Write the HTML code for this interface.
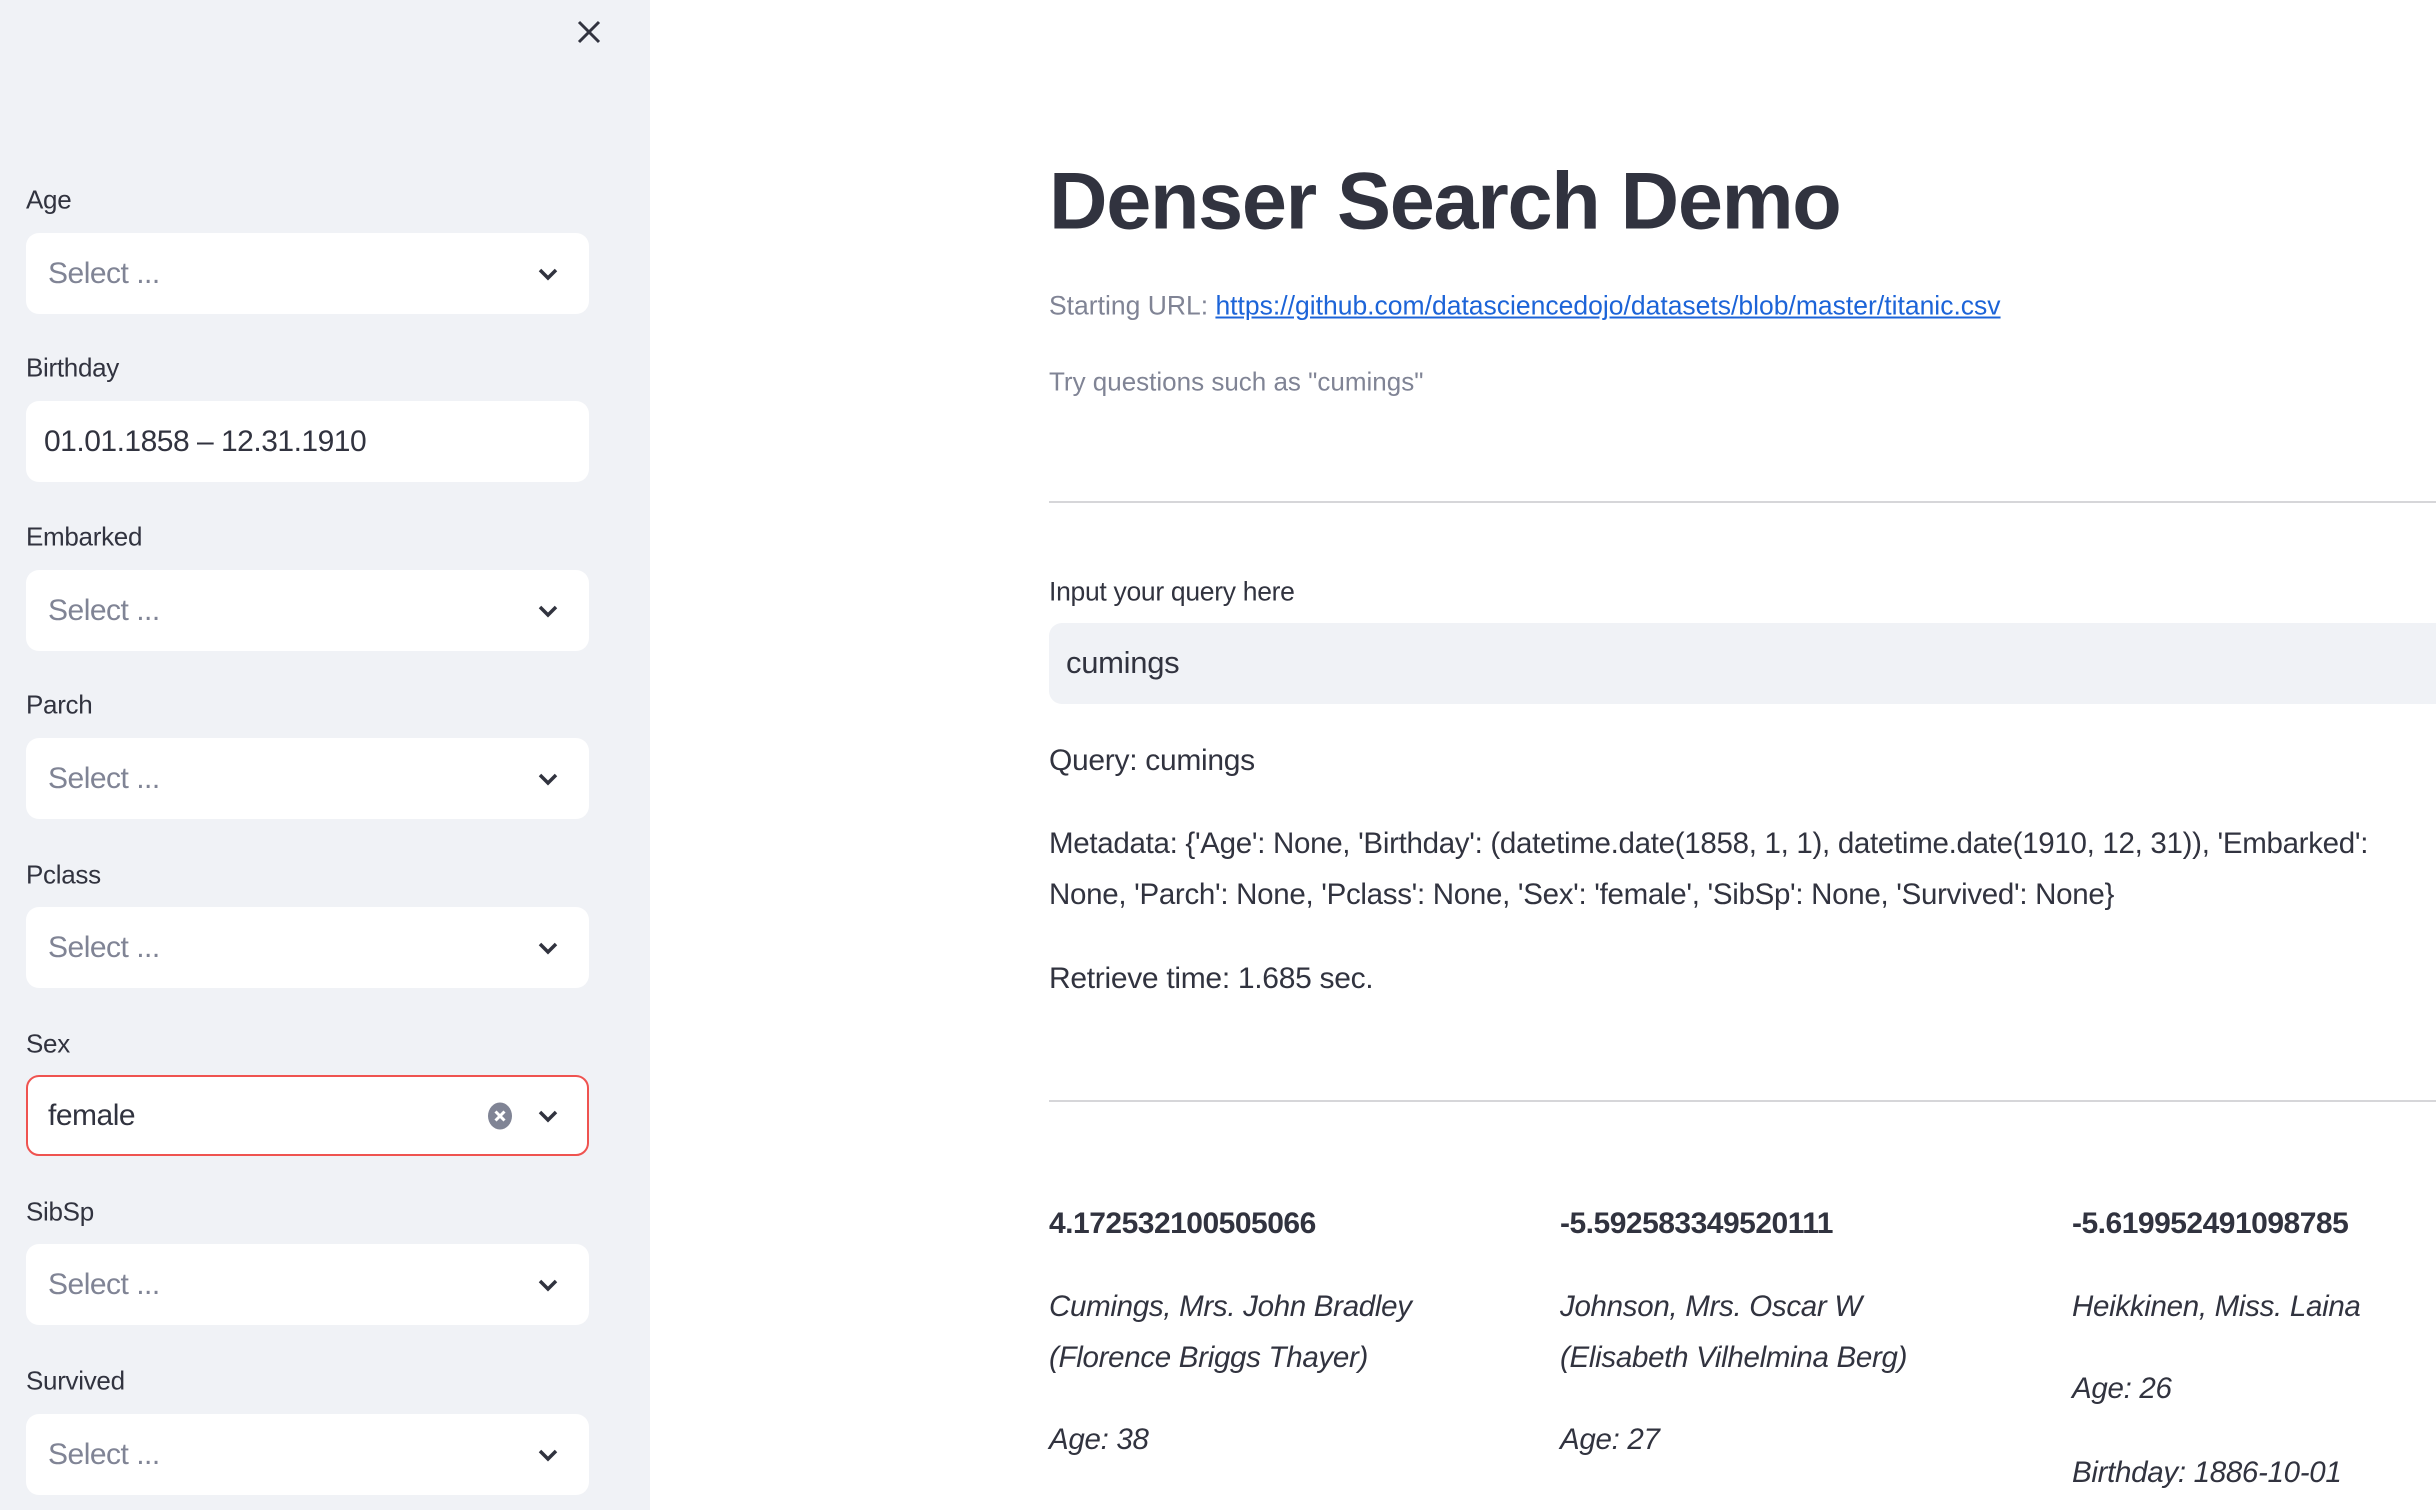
<!DOCTYPE html>
<html><head><meta charset="utf-8"><style>
*{margin:0;padding:0;box-sizing:border-box}
body{width:2436px;height:1510px;overflow:hidden;background:#fff;font-family:"Liberation Sans",sans-serif;color:#31333f;position:relative}
.sb{position:absolute;left:0;top:0;width:650px;height:1510px;background:#f0f2f6}
.lbl{position:absolute;left:26px;font-size:26px;letter-spacing:-0.3px;color:#31333f;transform:translateY(-50%)}
.box{position:absolute;left:26px;width:563px;height:81px;background:#fff;border-radius:13px}
.box .t{position:absolute;left:22px;top:50%;transform:translateY(-50%);font-size:30px;letter-spacing:-0.5px;color:#808495}
.box svg.ch{position:absolute;left:510px;top:29px}
.m{position:absolute;white-space:nowrap;transform:translateY(-50%)}
</style></head><body>
<div class="sb">
<svg style="position:absolute;left:576px;top:19px" width="26" height="26" viewBox="0 0 26 26"><path d="M3 3L23 23M23 3L3 23" stroke="#31333f" stroke-width="3"/></svg>

<div class="lbl" style="top:200px">Age</div>
<div class="box" style="top:233px"><div class="t">Select ...</div><svg class="ch" width="24" height="24" viewBox="0 0 24 24"><path d="M4 8l8 8 8-8" fill="none" stroke="#31333f" stroke-width="3.5"/></svg></div>

<div class="lbl" style="top:368px">Birthday</div>
<div class="box" style="top:401px"><div class="t" style="left:18px;color:#31333f">01.01.1858 – 12.31.1910</div></div>

<div class="lbl" style="top:537px">Embarked</div>
<div class="box" style="top:570px"><div class="t">Select ...</div><svg class="ch" width="24" height="24" viewBox="0 0 24 24"><path d="M4 8l8 8 8-8" fill="none" stroke="#31333f" stroke-width="3.5"/></svg></div>

<div class="lbl" style="top:705px">Parch</div>
<div class="box" style="top:738px"><div class="t">Select ...</div><svg class="ch" width="24" height="24" viewBox="0 0 24 24"><path d="M4 8l8 8 8-8" fill="none" stroke="#31333f" stroke-width="3.5"/></svg></div>

<div class="lbl" style="top:875px">Pclass</div>
<div class="box" style="top:907px"><div class="t">Select ...</div><svg class="ch" width="24" height="24" viewBox="0 0 24 24"><path d="M4 8l8 8 8-8" fill="none" stroke="#31333f" stroke-width="3.5"/></svg></div>

<div class="lbl" style="top:1044px">Sex</div>
<div class="box" style="top:1075px;border:2px solid #ef5350"><div class="t" style="left:20px;color:#31333f">female</div>
<svg style="position:absolute;left:458px;top:24px" width="28" height="30" viewBox="0 0 28 30"><ellipse cx="14" cy="15" rx="12" ry="13.5" fill="#808495"/><path d="M9.5 10.5l9 9M18.5 10.5l-9 9" stroke="#fff" stroke-width="3"/></svg>
<svg class="ch" style="left:508px;top:27px" width="24" height="24" viewBox="0 0 24 24"><path d="M4 8l8 8 8-8" fill="none" stroke="#31333f" stroke-width="3.5"/></svg></div>

<div class="lbl" style="top:1212px">SibSp</div>
<div class="box" style="top:1244px"><div class="t">Select ...</div><svg class="ch" width="24" height="24" viewBox="0 0 24 24"><path d="M4 8l8 8 8-8" fill="none" stroke="#31333f" stroke-width="3.5"/></svg></div>

<div class="lbl" style="top:1381px">Survived</div>
<div class="box" style="top:1414px"><div class="t">Select ...</div><svg class="ch" width="24" height="24" viewBox="0 0 24 24"><path d="M4 8l8 8 8-8" fill="none" stroke="#31333f" stroke-width="3.5"/></svg></div>
</div>

<div class="m" style="left:1049px;top:202px;font-size:81px;font-weight:bold;letter-spacing:-1.3px;color:#31333f">Denser Search Demo</div>
<div class="m" style="left:1049px;top:306px;font-size:26.5px;color:#808495">Starting URL: <span style="color:#1c64d8;text-decoration:underline">https://github.com/datasciencedojo/datasets/blob/master/titanic.csv</span></div>
<div class="m" style="left:1049px;top:382px;font-size:26px;color:#808495">Try questions such as "cumings"</div>
<div style="position:absolute;left:1049px;top:501px;width:1387px;height:2px;background:#d6d6d9"></div>
<div class="m" style="left:1049px;top:592px;font-size:26.5px;letter-spacing:-0.3px">Input your query here</div>
<div style="position:absolute;left:1049px;top:623px;width:1400px;height:81px;background:#f0f2f6;border-radius:13px 0 0 13px"></div>
<div class="m" style="left:1066px;top:663px;font-size:31px;letter-spacing:-0.3px">cumings</div>
<div class="m" style="left:1049px;top:761px;font-size:30px;letter-spacing:-0.3px">Query: cumings</div>
<div class="m" style="left:1049px;top:844px;font-size:29.5px;letter-spacing:-0.3px">Metadata: {'Age': None, 'Birthday': (datetime.date(1858, 1, 1), datetime.date(1910, 12, 31)), 'Embarked':</div>
<div class="m" style="left:1049px;top:895px;font-size:29.5px;letter-spacing:-0.3px">None, 'Parch': None, 'Pclass': None, 'Sex': 'female', 'SibSp': None, 'Survived': None}</div>
<div class="m" style="left:1049px;top:979px;font-size:30px;letter-spacing:-0.3px">Retrieve time: 1.685 sec.</div>
<div style="position:absolute;left:1049px;top:1100px;width:1387px;height:2px;background:#d6d6d9"></div>

<div class="m" style="left:1049px;top:1224px;font-size:30px;font-weight:bold;letter-spacing:-0.5px">4.172532100505066</div>
<div class="m" style="left:1560px;top:1224px;font-size:30px;font-weight:bold;letter-spacing:-0.5px">-5.592583349520111</div>
<div class="m" style="left:2072px;top:1224px;font-size:30px;font-weight:bold;letter-spacing:-0.5px">-5.619952491098785</div>

<div class="m" style="left:1049px;top:1307px;font-size:29.5px;font-style:italic;letter-spacing:-0.3px">Cumings, Mrs. John Bradley</div>
<div class="m" style="left:1049px;top:1358px;font-size:29.5px;font-style:italic;letter-spacing:-0.3px">(Florence Briggs Thayer)</div>
<div class="m" style="left:1049px;top:1440px;font-size:29.5px;font-style:italic;letter-spacing:-0.3px">Age: 38</div>

<div class="m" style="left:1560px;top:1307px;font-size:29.5px;font-style:italic;letter-spacing:-0.3px">Johnson, Mrs. Oscar W</div>
<div class="m" style="left:1560px;top:1358px;font-size:29.5px;font-style:italic;letter-spacing:-0.3px">(Elisabeth Vilhelmina Berg)</div>
<div class="m" style="left:1560px;top:1440px;font-size:29.5px;font-style:italic;letter-spacing:-0.3px">Age: 27</div>

<div class="m" style="left:2072px;top:1307px;font-size:29.5px;font-style:italic;letter-spacing:-0.3px">Heikkinen, Miss. Laina</div>
<div class="m" style="left:2072px;top:1389px;font-size:29.5px;font-style:italic;letter-spacing:-0.3px">Age: 26</div>
<div class="m" style="left:2072px;top:1473px;font-size:29.5px;font-style:italic;letter-spacing:-0.3px">Birthday: 1886-10-01</div>
</body></html>
